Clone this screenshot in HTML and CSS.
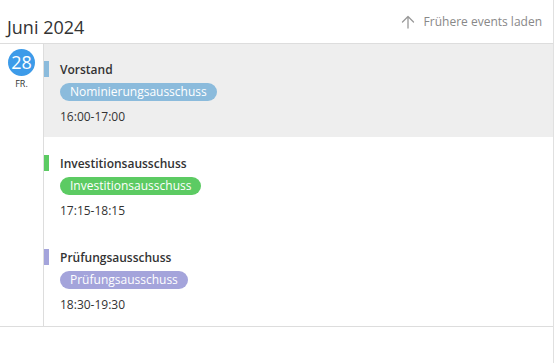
FILE: index.html
```html
<!DOCTYPE html>
<html lang="de">
<head>
<meta charset="utf-8">
<link rel="stylesheet" href="styles.css">
</head>
<body>
<div class="agenda">
  <header class="agenda-head">
    <h1 class="month">Juni 2024</h1>
    <a class="load-earlier" href="#">
      <svg class="arrow" width="14" height="14" viewBox="0 0 14 14" fill="none" stroke="#999" stroke-width="1.3" stroke-linecap="round" stroke-linejoin="round"><path d="M7 13V1.5M1.5 7L7 1.5L12.5 7"/></svg>
      <span>Frühere events laden</span>
    </a>
  </header>
  <section class="day">
    <div class="date">
      <div class="date-num">28</div>
      <div class="date-wd">FR.</div>
    </div>
    <div class="events">
      <div class="event event-active">
        <span class="bar bar-blue"></span>
        <div class="title">Vorstand</div>
        <div class="pill-row"><span class="pill pill-blue">Nominierungsausschuss</span></div>
        <div class="time">16:00-17:00</div>
      </div>
      <div class="event">
        <span class="bar bar-green"></span>
        <div class="title">Investitionsausschuss</div>
        <div class="pill-row"><span class="pill pill-green">Investitionsausschuss</span></div>
        <div class="time">17:15-18:15</div>
      </div>
      <div class="event">
        <span class="bar bar-purple"></span>
        <div class="title">Prüfungsausschuss</div>
        <div class="pill-row"><span class="pill pill-purple">Prüfungsausschuss</span></div>
        <div class="time">18:30-19:30</div>
      </div>
    </div>
  </section>
  <div class="rest"></div>
</div>
</body>
</html>
```
FILE: styles.css
```css
html, body {
  margin: 0;
  padding: 0;
  background: #fff;
}
body {
  font-family: "Open Sans", "Liberation Sans", sans-serif;
  color: #333;
}
.agenda {
  width: 553px;
  height: 363px;
  border-right: 1px solid #e0e0e0;
  display: flex;
  flex-direction: column;
}
.agenda-head {
  height: 44px;
  box-sizing: border-box;
  border-bottom: 1px solid #dddddd;
  display: flex;
  justify-content: space-between;
  align-items: flex-start;
  padding: 0 11px 0 7px;
}
.month {
  margin: 15px 0 0 0;
  font-size: 18px;
  line-height: 24px;
  font-weight: 400;
  color: #333;
}
.load-earlier {
  margin-top: 13px;
  display: flex;
  align-items: center;
  gap: 9px;
  font-size: 12px;
  line-height: 18px;
  color: #888;
  text-decoration: none;
}
.arrow {
  display: block;
}
.day {
  display: flex;
  border-bottom: 1px solid #dddddd;
}
.date {
  width: 43px;
  flex: none;
  border-right: 1px solid #dddddd;
  display: flex;
  flex-direction: column;
  align-items: center;
  padding-top: 5px;
}
.date-num {
  width: 27px;
  height: 27px;
  border-radius: 50%;
  background: #3d9be9;
  color: #fff;
  font-size: 18px;
  line-height: 27px;
  text-align: center;
}
.date-wd {
  font-size: 9px;
  line-height: 12px;
  margin-top: 2px;
  color: #333;
}
.events {
  flex: 1;
  display: flex;
  flex-direction: column;
}
.event {
  height: 94px;
  box-sizing: border-box;
  padding: 17px 0 0 0;
  display: grid;
  grid-template-columns: 5px 1fr;
  column-gap: 11px;
  grid-template-rows: 18px auto auto;
  align-content: start;
}
.event-active {
  background: #eeeeee;
  height: 93px;
  margin-bottom: 1px;
}
.bar {
  grid-column: 1;
  grid-row: 1;
  height: 16px;
  align-self: start;
}
.bar-blue { background: #8bbbdc; }
.bar-green { background: #5ccb63; }
.bar-purple { background: #a4a4db; }
.title {
  grid-column: 2;
  grid-row: 1;
  font-size: 12px;
  line-height: 18px;
  font-weight: 600;
  color: #333;
}
.pill-row {
  grid-column: 2;
  grid-row: 2;
  margin-top: 4px;
  display: flex;
}
.pill {
  display: inline-block;
  height: 18px;
  line-height: 18px;
  padding: 0 10px;
  border-radius: 9px;
  color: #fff;
  font-size: 12px;
}
.pill-blue { background: #8bbbdc; }
.pill-green { background: #5ccb63; }
.pill-purple { background: #a4a4db; }
.time {
  grid-column: 2;
  grid-row: 3;
  margin-top: 7px;
  font-size: 12px;
  line-height: 18px;
  color: #333;
}
.rest {
  flex: 1;
}
```
